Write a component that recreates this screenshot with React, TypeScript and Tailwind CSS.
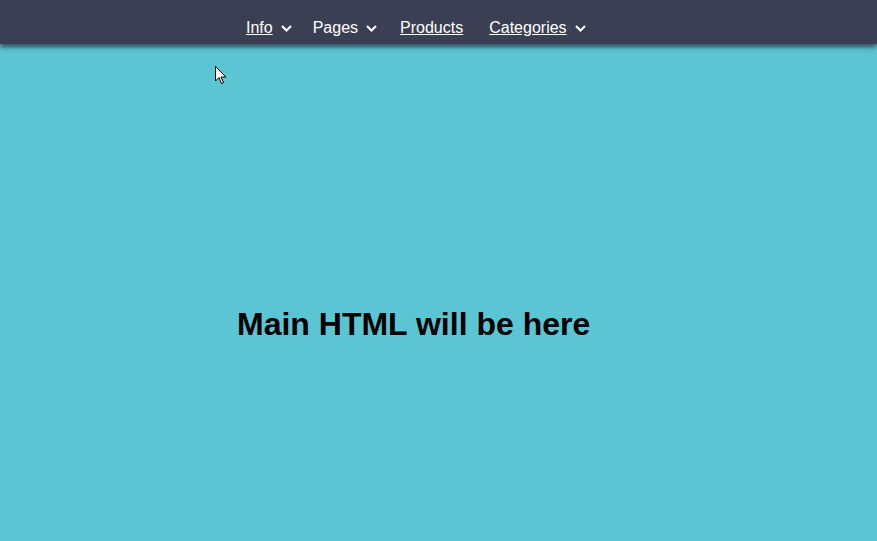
import React from "react";

const Chevron: React.FC = () => (
    <svg width="11" height="7" viewBox="0 0 11 7" className="ml-[8px] mt-[1px]">
        <path d="M1 1 L5.5 5.5 L10 1" fill="none" stroke="white" strokeWidth="2" />
    </svg>
);

const App: React.FC = () => {
    return (
        <div className="relative h-[541px] w-full bg-[#5bc5d3] font-['Liberation_Sans',Arial,sans-serif] overflow-hidden">
            {/* Top nav */}
            <nav className="relative z-10 h-[44px] bg-[#3b3f54] shadow-[0_3px_5px_rgba(40,44,60,0.8)] flex items-start pt-[16px] pl-[246px] text-white text-[16px]">
                <a href="#info" className="flex items-center underline mr-[21px]">
                    Info <Chevron />
                </a>
                <a href="#pages" className="flex items-center mr-[23px]">
                    Pages <Chevron />
                </a>
                <a href="#products" className="underline mr-[26px]">Products</a>
                <a href="#categories" className="flex items-center underline">
                    Categories <Chevron />
                </a>
            </nav>

            {/* Main */}
            <main className="pl-[237px] pt-[264px]">
                <h1 className="text-[32px] font-bold text-black leading-none">Main HTML will be here</h1>
            </main>

            {/* Mouse cursor */}
            <svg className="absolute left-[215px] top-[66px]" width="13" height="20" viewBox="0 0 13 20">
                <path d="M0.5 0.5 L0.5 15 L4 11.5 L6.5 17.5 L8.5 16.5 L6 11 L11 11 Z" fill="white" stroke="black" strokeWidth="1" />
            </svg>
        </div>
    );
};

export default App;
